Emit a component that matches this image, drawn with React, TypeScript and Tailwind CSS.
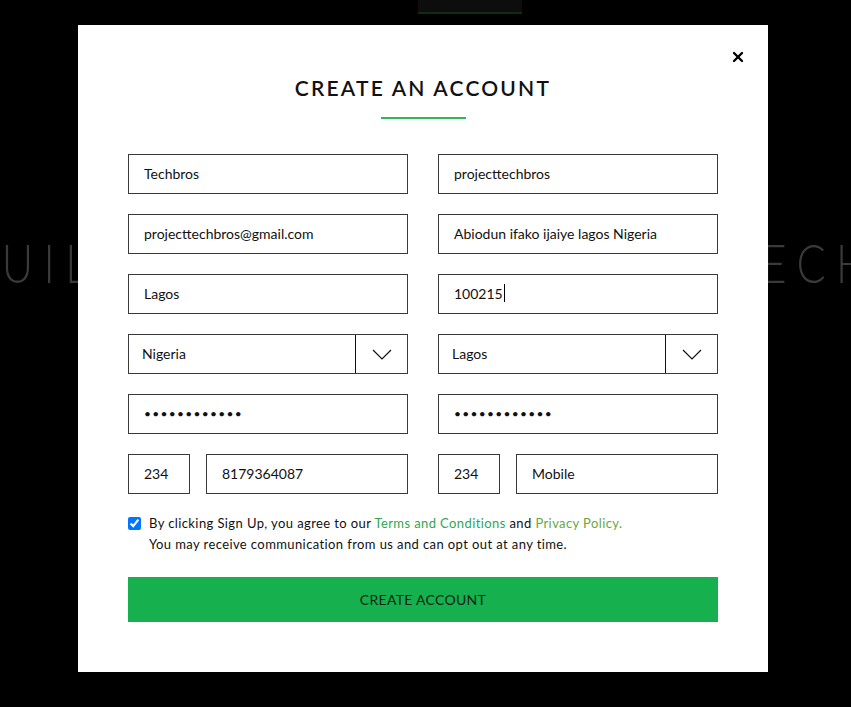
import { X } from 'lucide-react';

const font = { fontFamily: 'Lato, "Open Sans", sans-serif' };

function Field({ value, caret }: { value: string; caret?: boolean }) {
  return (
    <div className="h-[40px] border border-[#3a3a3a] flex items-center px-[15px] pb-[2px] text-[14px] text-[#111]">
      <span>{value}</span>
      {caret && <span className="inline-block w-px h-[18px] bg-black ml-px" />}
    </div>
  );
}

function Dots() {
  return (
    <div className="h-[40px] border border-[#3a3a3a] flex items-center px-[15px] text-[#111]">
      <span className="text-[12px] leading-none tracking-[1.3px]">••••••••••••</span>
    </div>
  );
}

function SelectBox({ value }: { value: string }) {
  return (
    <div className="h-[40px] border border-[#3a3a3a] flex items-stretch text-[14px] text-[#111]">
      <div className="flex-1 flex items-center px-[13px] pb-[2px]">{value}</div>
      <div className="w-[52px] border-l border-[#111] flex items-center justify-center">
        <svg width="20" height="11" viewBox="0 0 20 11" fill="none">
          <path d="M1 1l9 9 9-9" stroke="#111" strokeWidth="1.2" />
        </svg>
      </div>
    </div>
  );
}

function Phone({ number }: { number: string }) {
  return (
    <div className="flex gap-[16px]">
      <div className="w-[62px]">
        <Field value="234" />
      </div>
      <div className="flex-1">
        <Field value={number} />
      </div>
    </div>
  );
}

export default function App() {
  return (
    <div className="relative h-[707px] w-full bg-black overflow-hidden" style={font}>
      {/* page behind the modal */}
      <div className="pl-[418px]">
        <div className="w-[104px] h-[14px] bg-[#0d0d0d] border-b-2 border-[#0b2d18]" />
      </div>
      <div className="mt-[222px] flex justify-between whitespace-nowrap text-[54px] leading-[54px] font-light tracking-[13px] text-[#3a3a3a]">
        <span className="-ml-[36px] origin-left scale-x-[0.8]">BUILD</span>
        <span className="-mr-[28px] origin-right scale-x-[0.8]">TECH</span>
      </div>

      {/* modal */}
      <div className="absolute left-[78px] top-[25px] w-[690px] h-[647px] bg-white px-[50px] pt-[49px]">
        <button className="absolute right-[22px] top-[24px] text-black">
          <X size={16} strokeWidth={3.5} />
        </button>

        <h2 className="text-center text-[21px] leading-[28px] tracking-[2.2px] font-semibold text-[#111]">
          CREATE AN ACCOUNT
        </h2>
        <div className="mx-auto mt-[15px] w-[85px] h-[2px] bg-[#2fb75c]" />

        <div className="mt-[35px] grid grid-cols-2 gap-x-[30px] gap-y-[20px]">
          <Field value="Techbros" />
          <Field value="projecttechbros" />
          <Field value="projecttechbros@gmail.com" />
          <Field value="Abiodun ifako ijaiye lagos Nigeria" />
          <Field value="Lagos" />
          <Field value="100215" caret />
          <SelectBox value="Nigeria" />
          <SelectBox value="Lagos" />
          <Dots />
          <Dots />
          <Phone number="8179364087" />
          <Phone number="Mobile" />
        </div>

        <div className="mt-[19px] flex gap-[8px] text-[13px] leading-[21px] tracking-[0.4px] text-[#111]">
          <input
            type="checkbox"
            checked
            readOnly
            className="mt-[4px] w-[13px] h-[13px] accent-[#0075ff] shrink-0"
          />
          <p>
            By clicking Sign Up, you agree to our{' '}
            <span className="text-[#31a552]">Terms and Conditions</span> and{' '}
            <span className="text-[#6aa83a]">Privacy Policy.</span>
            <br />
            You may receive communication from us and can opt out at any time.
          </p>
        </div>

        <button className="mt-[22px] w-full h-[45px] bg-[#17b04e] text-[14px] tracking-[0.3px] text-[#0c2614]">
          CREATE ACCOUNT
        </button>
      </div>
    </div>
  );
}
